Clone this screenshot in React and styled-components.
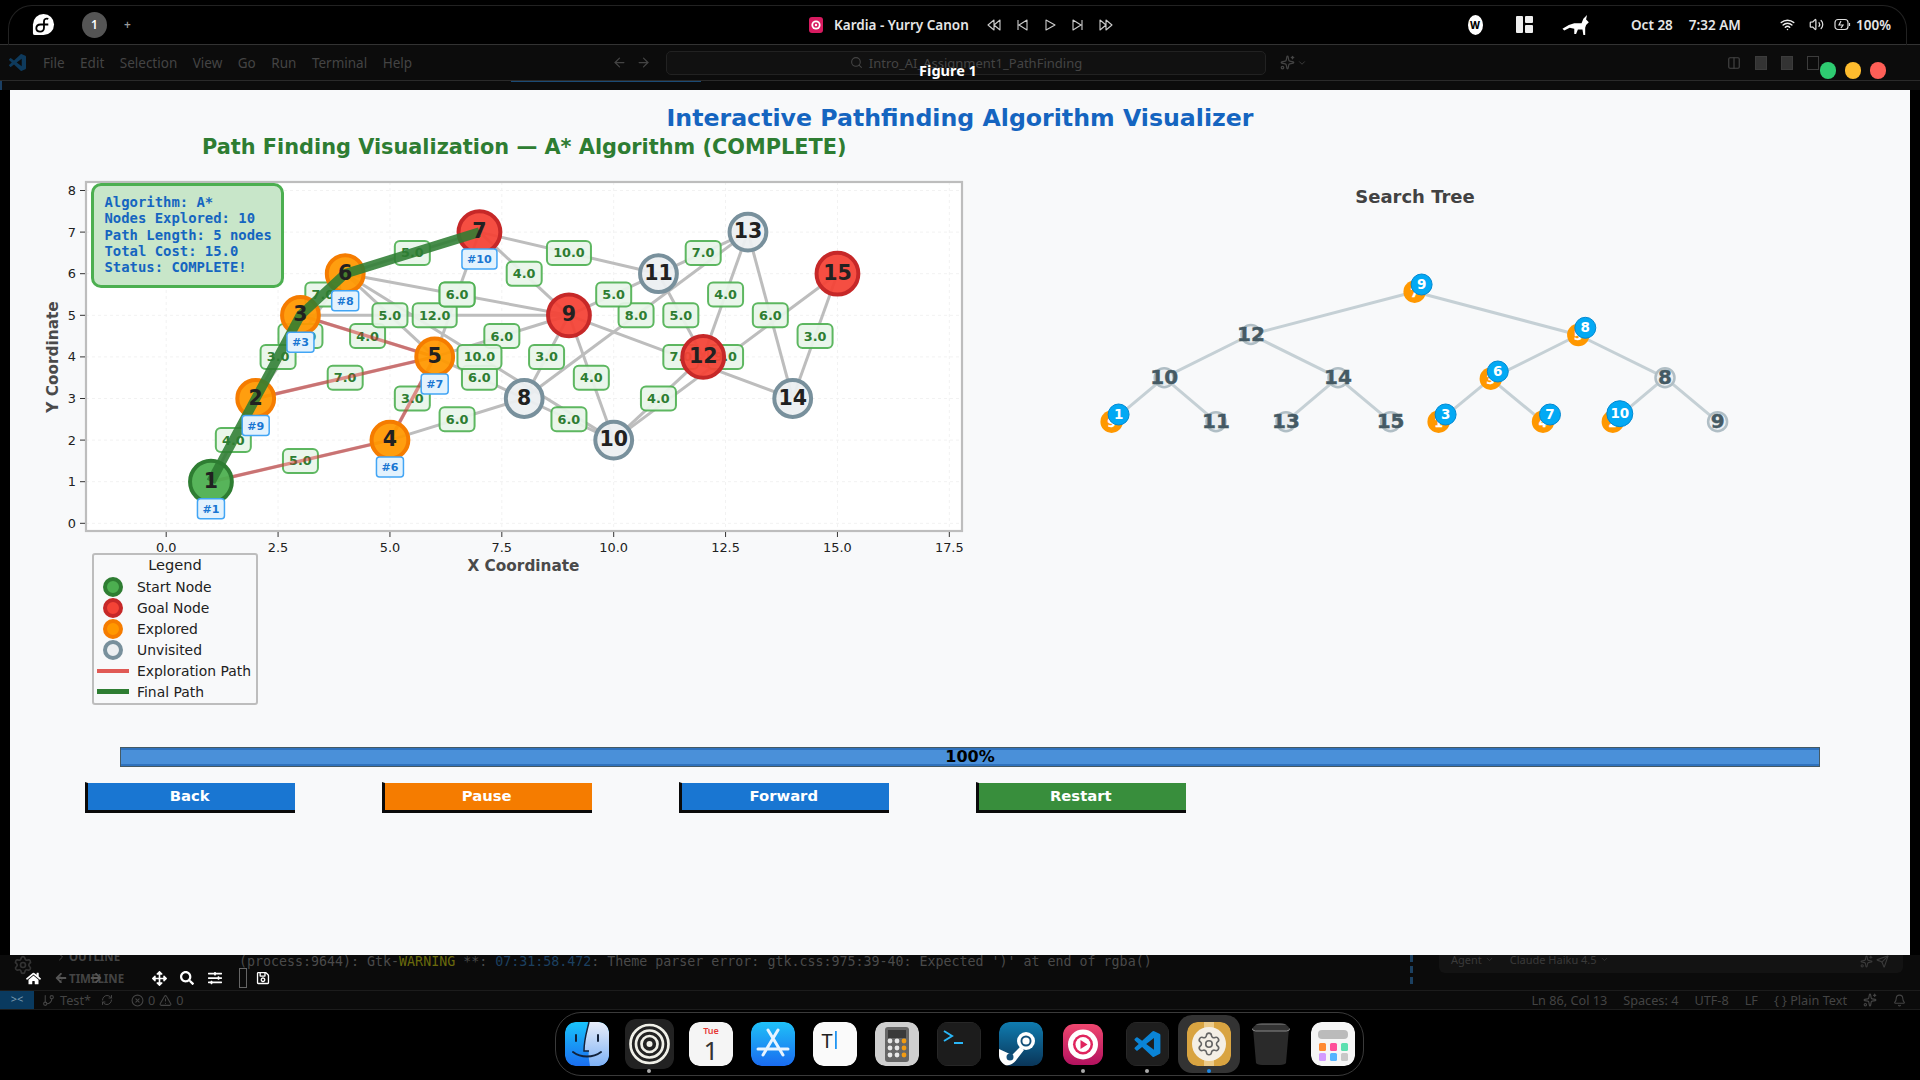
import React from 'react';
import styled, { createGlobalStyle } from 'styled-components';
import { Wifi, Volume2, Search, ArrowLeft, ArrowRight, ChevronRight, ChevronDown, Settings, GitBranch, RefreshCw, XCircle, AlertTriangle, Bell, Sparkles, Send, Columns2 } from 'lucide-react';
import { FaHome, FaArrowsAlt, FaSearch, FaSlidersH, FaRegSave, FaArrowLeft, FaArrowRight } from 'react-icons/fa';

const SANS = `'DejaVu Sans', sans-serif`;
const UI = `'Noto Sans', 'Open Sans', sans-serif`;
const VSCODE_PATH = 'M23.15 2.587L18.21.21a1.494 1.494 0 0 0-1.705.29l-9.46 8.63-4.12-3.128a.999.999 0 0 0-1.276.057L.327 7.261A1 1 0 0 0 .326 8.74L3.899 12 .326 15.26a1 1 0 0 0 .001 1.479L1.65 17.94a.999.999 0 0 0 1.276.057l4.12-3.128 9.46 8.63a1.492 1.492 0 0 0 1.704.29l4.942-2.377A1.5 1.5 0 0 0 24 20.06V3.939a1.5 1.5 0 0 0-.85-1.352zm-5.146 14.861L10.826 12l7.178-5.448v10.896z';

const GlobalStyle = createGlobalStyle`
  html, body { margin: 0; padding: 0; background: #000; }
  * { box-sizing: border-box; }
`;

const Screen = styled.div`
  width: 1920px;
  height: 1080px;
  background: #000;
  display: flex;
  flex-direction: column;
  overflow: hidden;
  font-family: ${UI};
`;

/* top shell bar */
const TopWrap = styled.div`
  height: 45px;
  padding: 5px 13px 0 8px;
  border-bottom: 1px solid #333;
  flex: none;
`;
const TopBar = styled.div`
  height: 40px;
  padding-bottom: 2px;
  display: flex;
  align-items: center;
  border: 1px solid #222;
  border-bottom: none;
  border-radius: 24px 24px 0 0;
  color: #e6e6e6;
  font-size: 13.5px;
  font-weight: 600;
`;
const TopLeft = styled.div`
  width: 800px;
  display: flex;
  align-items: center;
  padding-left: 23px;
`;
const Workspace = styled.div`
  width: 25px;
  height: 26px;
  margin-left: 27px;
  border-radius: 50%;
  background: #555;
  color: #fff;
  font-size: 12px;
  display: flex;
  align-items: center;
  justify-content: center;
`;
const PlusSign = styled.span`
  margin-left: 17px;
  color: #999;
  font-size: 12px;
`;
const Media = styled.div`
  width: 320px;
  display: flex;
  align-items: center;
`;
const MediaTitle = styled.span`
  margin: 0 11px 0 11px;
  white-space: nowrap;
`;
const MediaBtn = styled.span`
  width: 28px;
  display: flex;
  justify-content: center;
`;
const Tray = styled.div`
  margin-left: 326px;
  display: flex;
  align-items: center;
`;
const TraySlot = styled.div`
  width: ${p => p.$w}px;
  display: flex;
  justify-content: center;
  align-items: center;
  white-space: nowrap;
`;
const WLogo = styled.div`
  width: 15px;
  height: 20px;
  border-radius: 50%;
  background: #fff;
  color: #000;
  font-size: 10px;
  font-weight: 800;
  display: flex;
  align-items: center;
  justify-content: center;
`;
const LayoutMark = styled.div`
  width: 17px;
  height: 17px;
  display: grid;
  grid-template-columns: 7px 8px;
  grid-template-rows: 7px 8px;
  gap: 2px;
  & > span { background: #eee; border-radius: 1px; }
  & > span:first-child { grid-row: span 2; }
`;
const Clock = styled.div`
  width: 170px;
  display: flex;
  gap: 16px;
  padding-left: 30px;
  white-space: nowrap;
`;

/* editor chrome behind the figure window */
const MenuRow = styled.div`
  height: 35px;
  flex: none;
  display: flex;
  align-items: center;
  background: #0c0c0c;
  color: #444;
  font-size: 13.5px;
`;
const EditorLogo = styled.div`
  width: 43px;
  padding-left: 9px;
  display: flex;
`;
const MenuList = styled.div`
  width: 569px;
  display: flex;
  gap: 15.5px;
`;
const NavArrows = styled.div`
  width: 54px;
  display: flex;
  gap: 9px;
`;
const SearchBox = styled.div`
  width: 600px;
  height: 24px;
  display: flex;
  align-items: center;
  justify-content: center;
  gap: 6px;
  background: #111;
  border: 1px solid #222;
  border-radius: 5px;
  font-size: 13px;
`;
const DimIcons = styled.div`
  display: flex;
  align-items: center;
  gap: ${p => p.$gap || 8}px;
  margin-left: ${p => p.$left}px;
`;
const DimPane = styled.span`
  width: 12px;
  height: 14px;
  border: 1px solid #3c3c3c;
  background: ${p => p.$fill ? '#333' : 'transparent'};
`;
const TabStrip = styled.div`
  height: 10px;
  flex: none;
  background: #0c0c0c;
  border-top: 1px solid #2a2a2a;
  display: flex;
`;
const ActiveLeft = styled.div`
  width: 2px;
  background: #1b3f63;
`;
const ActiveTab = styled.div`
  margin-left: 509px;
  width: 190px;
  height: 1px;
  background: #1b4a75;
`;

/* figure window */
const FigureWindow = styled.div`
  position: relative;
  z-index: 2;
  flex: none;
  margin-left: 10px;
  width: 1900px;
  height: 865px;
  background: #f8f9fa;
  font-family: ${SANS};
`;
const WindowName = styled.div`
  position: absolute;
  top: -30px;
  left: 0;
  right: 24px;
  text-align: center;
  color: #fff;
  font: 700 14.5px ${UI};
`;
const TrafficLights = styled.div`
  position: absolute;
  top: -28px;
  right: 24px;
  display: flex;
  gap: 8.5px;
`;
const Light = styled.span`
  width: 16.5px;
  height: 16.5px;
  border-radius: 50%;
  background: ${p => p.$c};
`;
const MainTitle = styled.h1`
  margin: 13px 0 0;
  height: 30px;
  line-height: 30px;
  text-align: center;
  color: #1565c0;
  font-size: 23.66px;
  font-weight: 700;
`;
const Panels = styled.div`
  display: flex;
`;
const PlotColumn = styled.div`
  width: 960px;
  flex: none;
`;
const PlotTitle = styled.h2`
  margin: 0;
  height: 27px;
  line-height: 29px;
  padding-left: 192px;
  color: #2e7d32;
  font-size: 20.85px;
  font-weight: 700;
  white-space: nowrap;
`;
const PlotFrame = styled.div`
  position: relative;
  margin-left: 30px;
  width: 930px;
  height: 393px;
`;
const Canvas = styled.svg`
  display: block;
  overflow: visible;
`;
const StatsBox = styled.pre`
  position: absolute;
  left: 51px;
  top: 23px;
  width: 193px;
  height: 105px;
  margin: 0;
  padding: 8px 0 0 10.5px;
  background: #c8e6c9;
  border: 3.5px solid #4caf50;
  border-radius: 10px;
  color: #1565c0;
  font: 700 13.9px/16.3px 'DejaVu Sans Mono', monospace;
`;
const Legend = styled.div`
  margin: 0 0 0 82px;
  width: 166px;
  height: 152px;
  padding-top: 1px;
  background: #f8f9fa;
  border: 2px solid #bdbdbd;
  border-radius: 3px;
  color: #212121;
  font-size: 13.9px;
`;
const LegendTitle = styled.div`
  height: 20px;
  line-height: 18px;
  text-align: center;
  font-size: 14.6px;
`;
const LegendRow = styled.div`
  height: 21px;
  display: flex;
  align-items: center;
  white-space: nowrap;
`;
const LegendMark = styled.div`
  width: 43px;
  flex: none;
  display: flex;
  justify-content: center;
  padding-right: 5px;
`;
const LegendDot = styled.span`
  width: 20px;
  height: 20px;
  border-radius: 50%;
  background: ${p => p.$fill};
  border: 4px solid ${p => p.$edge};
`;
const LegendLine = styled.span`
  width: 32px;
  height: ${p => p.$h}px;
  background: ${p => p.$c};
`;
const TreeColumn = styled.div`
  margin-left: 120px;
  width: 650px;
`;
const TreeTitle = styled.h3`
  margin: 52px 0 6px;
  height: 24px;
  line-height: 24px;
  text-align: center;
  color: #424242;
  font-size: 18px;
  font-weight: 700;
`;
const Progress = styled.div`
  margin: 42px 0 0 110px;
  width: 1700px;
  height: 20px;
  background: #4a90d9;
  border: 1.5px solid #455a64;
  box-shadow: inset 0 2px 0 #2f72bd, inset 0 -2px 0 #2f72bd;
  color: #000;
  font-size: 16px;
  font-weight: 700;
  line-height: 17px;
  text-align: center;
`;
const Controls = styled.div`
  margin: 15px 0 0 75px;
  display: flex;
  gap: 87.5px;
`;
const ControlBtn = styled.button`
  width: 209.5px;
  height: 31px;
  padding: 0 3px 2px 0;
  border: none;
  border-left: 3px solid #0a0a0a;
  border-bottom: 3px solid #0a0a0a;
  border-top: 1px solid transparent;
  background: ${p => p.$bg} padding-box;
  color: #fff;
  font: 700 14.8px ${SANS};
`;

/* svg text kinds */
const TickText = styled.text`
  font: 12.9px ${SANS};
  fill: #212121;
`;
const AxisText = styled.text`
  font: 700 15.3px ${SANS};
  fill: #4a4a4a;
`;
const CostText = styled.text`
  font: 700 12.8px ${SANS};
  fill: #2e7d32;
`;
const OrderText = styled.text`
  font: 700 11.1px ${SANS};
  fill: #1976d2;
`;
const NodeText = styled.text`
  font: 700 20.5px ${SANS};
  fill: #212121;
`;
const TreeNodeText = styled.text`
  font: 700 ${p => p.$size}px ${SANS};
  fill: ${p => p.$c};
  stroke: ${p => p.$c};
  stroke-width: 0.4px;
`;
const TreeBadgeText = styled.text`
  font: 700 13.5px ${SANS};
  fill: #fff;
`;

/* bottom panel */
const BottomPanel = styled.div`
  position: relative;
  height: 35px;
  flex: none;
  display: flex;
  background: #0b0b0b;
  color: #444;
`;
const SideSection = styled.div`
  width: 239px;
  flex: none;
  padding-left: 55px;
  font-size: 11.5px;
  font-weight: 700;
  line-height: 16px;
  margin-top: -9px;
  & > div { height: 22px; display: flex; align-items: center; gap: 2px; }
`;
const LogLine = styled.div`
  width: 1171px;
  flex: none;
  font: 13.3px/14px 'DejaVu Sans Mono', monospace;
  white-space: nowrap;
  color: #4a4a4a;
  & b { font-weight: 400; color: #6a6a0c; }
  & i { font-style: normal; color: #1c4060; }
`;
const DashMark = styled.span`
  width: 3px;
  height: 30px;
  flex: none;
  background: repeating-linear-gradient(#1c4060 0 7px, transparent 7px 11px);
`;
const ChatBox = styled.div`
  margin-left: 26px;
  width: 464px;
  height: 18px;
  padding: 0 14px 0 12px;
  background: #131313;
  border-radius: 0 0 6px 6px;
  font-size: 11px;
  line-height: 9px;
  color: #3a3a3a;
  display: flex;
  gap: 16px;
  overflow: hidden;
`;
const ChatItem = styled.span`
  display: flex;
  align-items: flex-start;
  gap: 3px;
  margin-left: ${p => p.$auto ? 'auto' : '0'};
`;
const Gear = styled.div`
  position: absolute;
  left: 13px;
  top: 0;
`;
const Toolbar = styled.div`
  position: absolute;
  left: 23px;
  top: 13px;
  height: 20px;
  display: flex;
  align-items: center;
  color: #fff;
`;
const ToolSlot = styled.div`
  width: ${p => p.$w}px;
  display: flex;
  justify-content: center;
  align-items: center;
  color: ${p => p.$dim ? '#555' : '#fff'};
`;
const ToolDivider = styled.span`
  width: 8px;
  height: 20px;
  border: 1px solid #666;
`;
const StatusBar = styled.div`
  height: 20px;
  flex: none;
  display: flex;
  align-items: center;
  background: #0b0b0b;
  border-top: 1px solid #1c1c1c;
  border-bottom: 1px solid #1c1c1c;
  color: #444;
  font-size: 12.7px;
`;
const RemoteBox = styled.div`
  width: 34px;
  height: 100%;
  background: #0a3a5f;
  color: #7a9ab0;
  font-size: 11px;
  text-align: center;
`;
const StatusLeft = styled.div`
  margin-left: 8px;
  display: flex;
  align-items: center;
  gap: 10px;
`;
const StatusGroup = styled.div`
  display: flex;
  align-items: center;
  gap: ${p => p.$gap}px;
  margin-left: ${p => p.$left || 0}px;
`;
const StatusRight = styled.div`
  margin-left: auto;
  padding-right: 14px;
  display: flex;
  align-items: center;
  gap: 16px;
  white-space: nowrap;
`;

/* dock */
const DockRow = styled.div`
  flex: 1;
  display: flex;
  padding-left: 555px;
  align-items: flex-start;
  padding-top: 2px;
`;
const Dock = styled.div`
  width: 809px;
  height: 64px;
  border: 1px solid #3a3a3a;
  border-radius: 26px;
  display: flex;
  align-items: center;
`;
const DockSlot = styled.div`
  position: relative;
  width: 62px;
  height: 58px;
  flex: none;
  display: flex;
  align-items: center;
  justify-content: center;
  border-radius: 14px;
  background: ${p => p.$active ? '#333' : 'transparent'};
  & > svg { border-radius: 11px; }
`;
const DockDot = styled.span`
  position: absolute;
  bottom: 0;
  left: 50%;
  margin-left: -2px;
  width: 4px;
  height: 4px;
  border-radius: 50%;
  background: ${p => p.$c || '#aaa'};
`;
const DockSep = styled.span`
  width: 1px;
  height: 50px;
  background: #2a2a2a;
  margin-right: 2px;
`;

/* plot data, coordinates in graph units */
const X = v => 166.2 + 44.75 * v;
const Y = v => 523.3 - 41.6 * v;

const NODES = {
  1: [1, 1, 'start', '#1'], 2: [2, 3, 'seen', '#9'], 3: [3, 5, 'seen', '#3'], 4: [5, 2, 'seen', '#6'],
  5: [6, 4, 'seen', '#7'], 6: [4, 6, 'seen', '#8'], 7: [7, 7, 'goal', '#10'], 8: [8, 3, 'new'],
  9: [9, 5, 'goal'], 10: [10, 2, 'new'], 11: [11, 6, 'new'], 12: [12, 4, 'goal'],
  13: [13, 7, 'new'], 14: [14, 3, 'new'], 15: [15, 6, 'goal'],
};
const NODE_STYLE = {
  start: { fill: '#4caf50', edge: '#2e7d32', r: 20.9 },
  goal: { fill: '#f44336', edge: '#c62828', r: 20.9 },
  seen: { fill: '#ff9800', edge: '#f57c00', r: 18.4 },
  new: { fill: '#eceff1', edge: '#78909c', r: 18.4 },
};
const EDGES = [
  [2, 6, '10.0'], [1, 2, '4.0'], [2, 3, '3.0'], [3, 6, '7.0'], [6, 7, '5.0'],
  [1, 4, '5.0'], [2, 5, '7.0'], [3, 5, '4.0'], [4, 5, '3.0'], [4, 8, '6.0'], [5, 6, '5.0'], [3, 9, '12.0'],
  [6, 9, '6.0'], [5, 7, '6.0'], [5, 9, '6.0'], [5, 8, '6.0'], [6, 10, '10.0'], [7, 9, '4.0'], [7, 11, '10.0'],
  [8, 9, '3.0'], [8, 10, '6.0'], [8, 13, '8.0'], [9, 10, '4.0'], [9, 11, '5.0'], [9, 14, '7.0'], [10, 12, '4.0'],
  [10, 15, '9.0'], [11, 12, '5.0'], [11, 13, '7.0'], [12, 13, '4.0'], [13, 14, '6.0'], [14, 15, '3.0'],
];
const RED_EDGES = [[1, 4], [4, 5], [2, 5], [3, 5]];
const FINAL_PATH = [1, 2, 3, 6, 7];
const XTICKS = ['0.0', '2.5', '5.0', '7.5', '10.0', '12.5', '15.0', '17.5'];

const PlotSvg = () => (
  <Canvas width="930" height="393" viewBox="40 160 930 393">
    <rect x="86" y="182" width="876" height="349" fill="#fff" />
    {XTICKS.map((t, i) => (
      <line key={t} x1={X(i * 2.5)} x2={X(i * 2.5)} y1="182" y2="531" stroke="#f2f2f2" strokeDasharray="3 3" />
    ))}
    {[0, 1, 2, 3, 4, 5, 6, 7, 8].map(t => (
      <line key={t} x1="86" x2="962" y1={Y(t)} y2={Y(t)} stroke="#f2f2f2" strokeDasharray="3 3" />
    ))}
    {EDGES.map(([a, b]) => (
      <line key={`${a}-${b}`} x1={X(NODES[a][0])} y1={Y(NODES[a][1])} x2={X(NODES[b][0])} y2={Y(NODES[b][1])} stroke="#bdbdbd" strokeWidth="3" />
    ))}
    {EDGES.map(([a, b, cost]) => {
      const mx = X((NODES[a][0] + NODES[b][0]) / 2);
      const my = Y((NODES[a][1] + NODES[b][1]) / 2);
      const w = cost.length > 3 ? 44 : 35;
      return (
        <g key={`${a}-${b}`}>
          <rect x={mx - w / 2} y={my - 12} width={w} height="24" rx="5" fill="#e8f5e9" fillOpacity="0.92" stroke="#4caf50" strokeOpacity="0.9" strokeWidth="2" />
          <CostText x={mx} y={my + 4.5} textAnchor="middle">{cost}</CostText>
        </g>
      );
    })}
    {RED_EDGES.map(([a, b]) => (
      <line key={`${a}-${b}`} x1={X(NODES[a][0])} y1={Y(NODES[a][1])} x2={X(NODES[b][0])} y2={Y(NODES[b][1])} stroke="#d32f2f" strokeOpacity="0.52" strokeWidth="3.5" />
    ))}
    {Object.entries(NODES).map(([id, [x, y, kind]]) => (
      <circle key={id} cx={X(x)} cy={Y(y)} r={NODE_STYLE[kind].r} fill={NODE_STYLE[kind].fill} fillOpacity="0.94" stroke={NODE_STYLE[kind].edge} strokeWidth="4" />
    ))}
    <polyline
      points={FINAL_PATH.map(id => `${X(NODES[id][0])},${Y(NODES[id][1])}`).join(' ')}
      fill="none" stroke="#2e7d32" strokeOpacity="0.88" strokeWidth="9.5"
    />
    {Object.entries(NODES).map(([id, [x, y]]) => (
      <NodeText key={id} x={X(x)} y={Y(y) + 6} textAnchor="middle">{id}</NodeText>
    ))}
    {Object.values(NODES).filter(n => n[3]).map(([x, y, , order]) => {
      const w = order.length > 2 ? 35 : 27;
      return (
        <g key={order}>
          <rect x={X(x) - w / 2} y={Y(y) + 17} width={w} height="20" rx="3" fill="#e3f2fd" stroke="#42a5f5" strokeWidth="1.5" />
          <OrderText x={X(x)} y={Y(y) + 31} textAnchor="middle">{order}</OrderText>
        </g>
      );
    })}
    <rect x="86" y="182" width="876" height="349" fill="none" stroke="#bdbdbd" strokeWidth="2.2" />
    {XTICKS.map((t, i) => (
      <g key={t}>
        <line x1={X(i * 2.5)} x2={X(i * 2.5)} y1="532" y2="537" stroke="#333" />
        <TickText x={X(i * 2.5)} y="551.5" textAnchor="middle">{t}</TickText>
      </g>
    ))}
    {[0, 1, 2, 3, 4, 5, 6, 7, 8].map(t => (
      <g key={t}>
        <line x1="80" x2="85" y1={Y(t)} y2={Y(t)} stroke="#333" />
        <TickText x="76" y={Y(t) + 4.5} textAnchor="end">{t}</TickText>
      </g>
    ))}
    <AxisText x="523.5" y="571" textAnchor="middle">X Coordinate</AxisText>
    <AxisText transform="translate(58 357) rotate(-90)" textAnchor="middle">Y Coordinate</AxisText>
  </Canvas>
);

/* search tree, page coordinates */
const TREE = [
  { x: 1414.6, y: 291.7, t: '7', b: '9', p: null },
  { x: 1250.9, y: 334.5, t: '12', p: 0 },
  { x: 1578.3, y: 335, t: '5', b: '8', p: 0 },
  { x: 1164.2, y: 377.7, t: '10', p: 1 },
  { x: 1338, y: 377.7, t: '14', p: 1 },
  { x: 1490.8, y: 378.7, t: '3', b: '6', p: 2 },
  { x: 1665, y: 377.7, t: '8', p: 2 },
  { x: 1111.6, y: 421.7, t: '9', b: '1', p: 3 },
  { x: 1216, y: 421.7, t: '11', p: 3 },
  { x: 1286, y: 421.7, t: '13', p: 4 },
  { x: 1390.6, y: 421.7, t: '15', p: 4 },
  { x: 1438.6, y: 421.7, t: '1', b: '3', p: 5 },
  { x: 1543, y: 421.7, t: '4', b: '7', p: 5 },
  { x: 1612.8, y: 421.7, t: '2', b: '10', p: 6 },
  { x: 1717.6, y: 421.7, t: '9', p: 6 },
];

const TreeSvg = () => (
  <Canvas width="650" height="225" viewBox="1090 215 650 225">
    {TREE.filter(n => n.p !== null).map(n => (
      <line key={n.x} x1={TREE[n.p].x} y1={TREE[n.p].y} x2={n.x} y2={n.y} stroke="#c5d0d5" strokeWidth="3" />
    ))}
    {TREE.map(n => (
      <g key={n.x}>
        <circle cx={n.x} cy={n.y} r={n.b ? 11.2 : 9.5} fill={n.b ? '#ff9800' : '#eceff1'} stroke={n.b ? '#ff9800' : '#b0bec5'} strokeWidth={n.b ? 0 : 2.5} />
        <TreeNodeText x={n.x} y={n.y + (n.b ? 5 : 6.5)} textAnchor="middle" $size={n.b ? 12 : 20} $c={n.b ? '#fff' : '#455a64'}>{n.t}</TreeNodeText>
      </g>
    ))}
    {TREE.filter(n => n.b).map(n => {
      const big = n.b.length > 1;
      const cx = n.x + 7;
      const cy = n.y - (big ? 8 : 7.2);
      return (
        <g key={n.b}>
          <circle cx={cx} cy={cy} r={big ? 13 : 10.5} fill="#03a9f4" stroke="#0288d1" strokeWidth="1" />
          <TreeBadgeText x={cx} y={cy + 4} textAnchor="middle">{n.b}</TreeBadgeText>
        </g>
      );
    })}
  </Canvas>
);

/* small drawn icons */
const FedoraMark = () => (
  <svg width="23" height="23" viewBox="0 0 24 24">
    <path d="M12 1a11 11 0 0 1 0 22H3a2 2 0 0 1-2-2V12A11 11 0 0 1 12 1z" fill="#fff" />
    <path d="M13 12H9c-3 0-4.500 2-4.500 4s1.500 3.500 4 3.500 4-1.500 4-4V8.500c0-2 2-3.300 4.500-2.300M13 12h4" fill="none" stroke="#000" strokeWidth="1.900" />
  </svg>
);
const MusicSmall = () => (
  <svg width="14" height="16" viewBox="0 0 14 16">
    <rect width="14" height="16" rx="3" fill="#d81b60" />
    <circle cx="7" cy="8" r="4.6" fill="#fff" />
    <circle cx="7" cy="8" r="2.8" fill="#d81b60" />
    <circle cx="7" cy="8" r="1.2" fill="#fff" />
  </svg>
);
const MediaIcon = ({ d }) => (
  <svg width="18" height="16" viewBox="0 0 18 16" fill="none" stroke="#ccc" strokeWidth="1.1" strokeLinejoin="round">
    <path d={d} />
  </svg>
);
const Goat = () => (
  <svg width="30" height="20" viewBox="0 0 32 22" fill="#fff">
    <polygon points="0,15 7,11 13,9 21,9 23,4 27,0 26,5 29,8 26,11 25,14 25,22 23,22 22,16 17,16 15,21 13,21 13,15 8,14 2,17" />
  </svg>
);
const Battery = () => (
  <svg width="17" height="13" viewBox="0 0 17 13" fill="none" stroke="#ddd" strokeWidth="1.2">
    <rect x="1" y="1.500" width="13" height="10" rx="3" />
    <path d="M15.500 5v3M7 3 5 7h4l-2 3" />
  </svg>
);
const EditorMark = ({ size, color }) => (
  <svg width={size} height={size} viewBox="0 0 24 24"><path d={VSCODE_PATH} fill={color} /></svg>
);

const DOCK_BEFORE = [
  { id: 'finder', icon: (
    <svg width="44" height="44" viewBox="0 0 44 44">
      <defs>
        <linearGradient id="fa" x1="0" y1="0" x2="0" y2="1"><stop offset="0" stopColor="#19c3fb" /><stop offset="1" stopColor="#1a6ef0" /></linearGradient>
        <linearGradient id="fb" x1="0" y1="0" x2="0" y2="1"><stop offset="0" stopColor="#e8eefa" /><stop offset="1" stopColor="#7fb2f5" /></linearGradient>
      </defs>
      <rect width="44" height="44" rx="10" fill="url(#fa)" />
      <path d="M24 0h10a10 10 0 0 1 10 10v24a10 10 0 0 1-10 10H25c-1-7-2-11-1-15h-5C19 17 22 9 24 0z" fill="url(#fb)" />
      <path d="M11 13v6M33 13v6M8 30c8 6 20 6 28 0" fill="none" stroke="#12223a" strokeWidth="2" strokeLinecap="round" />
      <path d="M24 0C22 9 19 17 19 29h5" fill="none" stroke="#12223a" strokeWidth="1.500" />
    </svg>
  ) },
  { id: 'rings', dot: true, icon: (
    <svg width="49" height="50" viewBox="0 0 49 50">
      <rect width="49" height="50" rx="9" fill="#222" />
      <g fill="none" stroke="#f0f0e8" strokeWidth="2.700">
        <circle cx="24.500" cy="25" r="19" /><circle cx="24.500" cy="25" r="13.500" /><circle cx="24.500" cy="25" r="8" />
      </g>
      <circle cx="24.500" cy="25" r="3" fill="#f0f0e8" />
    </svg>
  ) },
  { id: 'calendar', icon: (
    <svg width="44" height="44" viewBox="0 0 44 44">
      <rect width="44" height="44" rx="10" fill="#f5f5f5" />
      <text x="22" y="12" textAnchor="middle" fontFamily="'Noto Sans', sans-serif" fontSize="9" fontWeight="600" fill="#e53935">Tue</text>
      <text x="22" y="38" textAnchor="middle" fontFamily="'Noto Sans', sans-serif" fontSize="26" fill="#333">1</text>
    </svg>
  ) },
  { id: 'store', icon: (
    <svg width="44" height="44" viewBox="0 0 44 44">
      <defs><linearGradient id="as" x1="0" y1="0" x2="0" y2="1"><stop offset="0" stopColor="#1fc1f8" /><stop offset="1" stopColor="#1a6bf0" /></linearGradient></defs>
      <rect width="44" height="44" rx="10" fill="url(#as)" />
      <path d="M17 8l15 25M27 8L12 33M7 27h30" fill="none" stroke="#e8f4ff" strokeWidth="3" strokeLinecap="round" />
    </svg>
  ) },
  { id: 'typora', icon: (
    <svg width="44" height="44" viewBox="0 0 44 44">
      <rect width="44" height="44" rx="10" fill="#fafafa" />
      <text x="14" y="26" textAnchor="middle" fontFamily="'Noto Sans', sans-serif" fontSize="20" fill="#222">T</text>
      <rect x="22" y="9" width="1.800" height="18" fill="#2196f3" />
    </svg>
  ) },
  { id: 'calc', icon: (
    <svg width="44" height="44" viewBox="0 0 44 44">
      <rect width="44" height="44" rx="10" fill="#cfcfcf" />
      <rect x="10" y="5" width="24" height="35" rx="3" fill="#666" />
      <rect x="13" y="8" width="18" height="8" fill="#3a3a3a" />
      {[19, 26, 33].map(y => [15, 22, 29].map(x => (
        <circle key={`${x}-${y}`} cx={x} cy={y} r="2.400" fill={x === 29 ? '#f39c12' : '#e8e8e8'} />
      )))}
    </svg>
  ) },
  { id: 'term', icon: (
    <svg width="44" height="44" viewBox="0 0 44 44">
      <rect width="44" height="44" rx="10" fill="#1c1c1c" stroke="#333" />
      <path d="M7 9l8 5-8 5" fill="none" stroke="#29b6f6" strokeWidth="2" />
      <rect x="17" y="20" width="9" height="2" fill="#29b6f6" />
    </svg>
  ) },
  { id: 'steam', icon: (
    <svg width="44" height="44" viewBox="0 0 44 44">
      <defs><linearGradient id="st" x1="0" y1="0" x2="0" y2="1"><stop offset="0" stopColor="#0f7cb0" /><stop offset="1" stopColor="#0a3558" /></linearGradient></defs>
      <rect width="44" height="44" rx="10" fill="url(#st)" />
      <circle cx="27" cy="19" r="9" fill="#fff" /><circle cx="27" cy="19" r="5.500" fill="#12507a" /><circle cx="27" cy="19" r="3.600" fill="#fff" />
      <path d="M0 27l13 6 8-8 4 3-7 9c-3 5-9 7-13 7H6a6 6 0 0 1-6-6z" fill="#fff" />
      <circle cx="11" cy="35" r="3.500" fill="#12507a" />
    </svg>
  ) },
  { id: 'music', dot: true, icon: (
    <svg width="40" height="41" viewBox="0 0 40 41">
      <defs><linearGradient id="mu" x1="0" y1="0" x2="0" y2="1"><stop offset="0" stopColor="#ef476f" /><stop offset="1" stopColor="#b3125f" /></linearGradient></defs>
      <rect width="40" height="41" rx="9" fill="url(#mu)" />
      <circle cx="20" cy="20.500" r="15" fill="#fff" /><circle cx="20" cy="20.500" r="10" fill="#e0245e" /><circle cx="20" cy="20.500" r="7.500" fill="#fff" />
      <path d="M17.500 16l7 4.500-7 4.500z" fill="#e0245e" />
    </svg>
  ) },
];
const LAUNCH_COLORS = ['#ff8a33', '#ff4f9a', '#5ce0b0', '#d39bff', '#56b4ff', '#c8c8c8'];
const DOCK_AFTER = [
  { id: 'code', dot: true, icon: (
    <svg width="43" height="44" viewBox="0 0 43 44">
      <rect width="43" height="44" rx="10" fill="#1e1e1e" stroke="#333" />
      <g transform="translate(8.500 9) scale(1.080)"><path d={VSCODE_PATH} fill="#0a84d6" /></g>
    </svg>
  ) },
  { id: 'settings', active: true, dot: '#1e88e5', icon: (
    <svg width="44" height="44" viewBox="0 0 44 44">
      <rect width="44" height="44" rx="10" fill="#d9a441" />
      <rect x="17" width="10" height="44" fill="#eccb8a" />
      <circle cx="22" cy="22" r="17" fill="#f4efe6" />
      <g transform="translate(9 9) scale(1.080)"><Settings width="24" height="24" color="#666" strokeWidth="1.500" /></g>
    </svg>
  ) },
  { id: 'trash', icon: (
    <svg width="40" height="42" viewBox="0 0 40 42">
      <path d="M2 5h36l-3 35a2 2 0 0 1-2 2H7a2 2 0 0 1-2-2z" fill="#2a2a2a" />
      <rect x="1" y="1" width="38" height="7" rx="3.500" fill="#333" stroke="#888" />
    </svg>
  ) },
  { id: 'launch', icon: (
    <svg width="44" height="44" viewBox="0 0 44 44">
      <rect width="44" height="44" rx="10" fill="#f6f6f6" />
      <rect x="7" y="8" width="30" height="9" rx="4" fill="#bbb" />
      {LAUNCH_COLORS.map((c, i) => (
        <rect key={c} x={8 + (i % 3) * 11} y={21 + Math.floor(i / 3) * 10} width="7" height="8" rx="1.500" fill={c} />
      ))}
    </svg>
  ) },
];

const MENU = ['File', 'Edit', 'Selection', 'View', 'Go', 'Run', 'Terminal', 'Help'];

const DockItem = ({ item }) => (
  <DockSlot $active={item.active}>
    {item.icon}
    {item.dot && <DockDot $c={typeof item.dot === 'string' ? item.dot : undefined} />}
  </DockSlot>
);

const App = () => (
  <Screen>
    <GlobalStyle />
    <TopWrap>
      <TopBar>
        <TopLeft>
          <FedoraMark />
          <Workspace>1</Workspace>
          <PlusSign>+</PlusSign>
        </TopLeft>
        <Media>
          <MusicSmall />
          <MediaTitle>Kardia - Yurry Canon</MediaTitle>
          <MediaBtn><MediaIcon d="M9 3 3 8l6 5zM15 3 9 8l6 5z" /></MediaBtn>
          <MediaBtn><MediaIcon d="M5 3v10M14 3 6 8l8 5z" /></MediaBtn>
          <MediaBtn><MediaIcon d="M5 3l9 5-9 5z" /></MediaBtn>
          <MediaBtn><MediaIcon d="M13 3v10M4 3l8 5-8 5z" /></MediaBtn>
          <MediaBtn><MediaIcon d="M3 3l6 5-6 5zM9 3l6 5-6 5z" /></MediaBtn>
        </Media>
        <Tray>
          <TraySlot $w={40}><WLogo>W</WLogo></TraySlot>
          <TraySlot $w={58}><LayoutMark><span /><span /><span /></LayoutMark></TraySlot>
          <TraySlot $w={48}><Goat /></TraySlot>
          <Clock><span>Oct 28</span><span>7:32 AM</span></Clock>
          <TraySlot $w={32}><Wifi size={15} color="#eee" strokeWidth={2.4} /></TraySlot>
          <TraySlot $w={26}><Volume2 size={15} color="#ddd" strokeWidth={2} /></TraySlot>
          <TraySlot $w={26}><Battery /></TraySlot>
          <TraySlot $w={37}>100%</TraySlot>
        </Tray>
      </TopBar>
    </TopWrap>

    <MenuRow>
      <EditorLogo><EditorMark size={17} color="#0e3a5c" /></EditorLogo>
      <MenuList>{MENU.map(m => <span key={m}>{m}</span>)}</MenuList>
      <NavArrows><ArrowLeft size={15} /><ArrowRight size={15} /></NavArrows>
      <SearchBox><Search size={13} />Intro_AI_Assignment1_PathFinding</SearchBox>
      <DimIcons $left={14} $gap={2}><Sparkles size={15} /><ChevronDown size={10} /></DimIcons>
      <DimIcons $left={420} $gap={14}>
        <Columns2 size={14} /><DimPane $fill /><DimPane $fill /><DimPane />
      </DimIcons>
    </MenuRow>
    <TabStrip><ActiveLeft /><ActiveTab /></TabStrip>

    <FigureWindow>
      <WindowName>Figure 1</WindowName>
      <TrafficLights>
        <Light $c="#2ecc71" /><Light $c="#febc2e" /><Light $c="#ff5f57" />
      </TrafficLights>
      <MainTitle>Interactive Pathfinding Algorithm Visualizer</MainTitle>
      <Panels>
        <PlotColumn>
          <PlotTitle>Path Finding Visualization — A* Algorithm (COMPLETE)</PlotTitle>
          <PlotFrame>
            <PlotSvg />
            <StatsBox>{'Algorithm: A*\nNodes Explored: 10\nPath Length: 5 nodes\nTotal Cost: 15.0\nStatus: COMPLETE!'}</StatsBox>
          </PlotFrame>
          <Legend>
            <LegendTitle>Legend</LegendTitle>
            <LegendRow><LegendMark><LegendDot $fill="#4caf50" $edge="#2e7d32" /></LegendMark>Start Node</LegendRow>
            <LegendRow><LegendMark><LegendDot $fill="#f44336" $edge="#c62828" /></LegendMark>Goal Node</LegendRow>
            <LegendRow><LegendMark><LegendDot $fill="#ff9800" $edge="#f57c00" /></LegendMark>Explored</LegendRow>
            <LegendRow><LegendMark><LegendDot $fill="#eceff1" $edge="#78909c" /></LegendMark>Unvisited</LegendRow>
            <LegendRow><LegendMark><LegendLine $h={4} $c="#e05a55" /></LegendMark>Exploration Path</LegendRow>
            <LegendRow><LegendMark><LegendLine $h={5} $c="#2e7d32" /></LegendMark>Final Path</LegendRow>
          </Legend>
        </PlotColumn>
        <TreeColumn>
          <TreeTitle>Search Tree</TreeTitle>
          <TreeSvg />
        </TreeColumn>
      </Panels>
      <Progress>100%</Progress>
      <Controls>
        <ControlBtn $bg="#1976d2">Back</ControlBtn>
        <ControlBtn $bg="#f57c00">Pause</ControlBtn>
        <ControlBtn $bg="#1976d2">Forward</ControlBtn>
        <ControlBtn $bg="#388e3c">Restart</ControlBtn>
      </Controls>
    </FigureWindow>

    <BottomPanel>
      <Gear><Settings size={20} color="#333" /></Gear>
      <SideSection>
        <div><ChevronRight size={12} />OUTLINE</div>
        <div><ChevronRight size={12} />TIMELINE</div>
      </SideSection>
      <LogLine>
        (process:9644): Gtk-<b>WARNING</b> **: <i>07:31:58.472</i>: Theme parser error: gtk.css:975:39-40: Expected ')' at end of rgba()
      </LogLine>
      <DashMark />
      <ChatBox>
        <ChatItem>Agent<ChevronDown size={9} /></ChatItem>
        <ChatItem>Claude Haiku 4.5<ChevronDown size={9} /></ChatItem>
        <ChatItem $auto><Sparkles size={13} /><Send size={13} /></ChatItem>
      </ChatBox>
      <Toolbar>
        <ToolSlot $w={20}><FaHome size={15} /></ToolSlot>
        <ToolSlot $w={35} $dim><FaArrowLeft size={12} /></ToolSlot>
        <ToolSlot $w={35} $dim><FaArrowRight size={12} /></ToolSlot>
        <ToolSlot $w={33}> </ToolSlot>
        <ToolSlot $w={27}><FaArrowsAlt size={15} /></ToolSlot>
        <ToolSlot $w={28}><FaSearch size={14} /></ToolSlot>
        <ToolSlot $w={28}><FaSlidersH size={14} /></ToolSlot>
        <ToolSlot $w={27}><ToolDivider /></ToolSlot>
        <ToolSlot $w={14}><FaRegSave size={14} /></ToolSlot>
      </Toolbar>
    </BottomPanel>
    <StatusBar>
      <RemoteBox>&gt;&lt;</RemoteBox>
      <StatusLeft>
        <StatusGroup $gap={5}><GitBranch size={13} /><span>Test*</span></StatusGroup>
        <RefreshCw size={12} />
        <StatusGroup $gap={4} $left={8}>
          <XCircle size={13} /><span>0</span>
          <AlertTriangle size={13} /><span>0</span>
        </StatusGroup>
      </StatusLeft>
      <StatusRight>
        <span>Ln 86, Col 13</span><span>Spaces: 4</span><span>UTF-8</span><span>LF</span><span>{'{ }'} Plain Text</span>
        <Sparkles size={14} />
        <Bell size={13} />
      </StatusRight>
    </StatusBar>

    <DockRow>
      <Dock>
        {DOCK_BEFORE.map(item => <DockItem key={item.id} item={item} />)}
        <DockSep />
        {DOCK_AFTER.map(item => <DockItem key={item.id} item={item} />)}
      </Dock>
    </DockRow>
  </Screen>
);

export default App;
